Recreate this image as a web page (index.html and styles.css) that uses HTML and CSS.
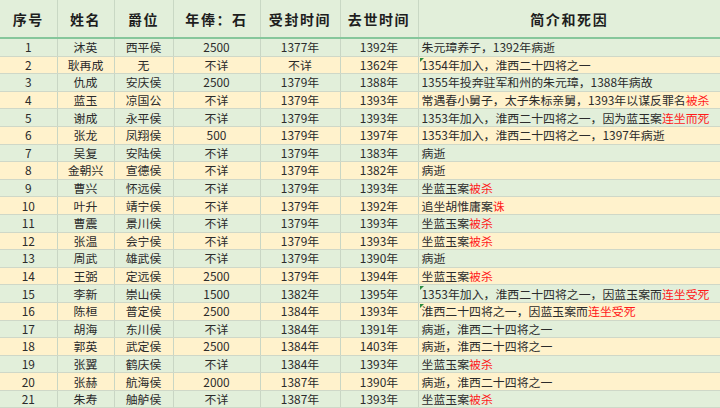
FILE: index.html
```html
<!DOCTYPE html>
<html lang="zh">
<head>
<meta charset="utf-8">
<link rel="stylesheet" href="styles.css">
</head>
<body>
<table class="sheet">
<colgroup>
<col class="c1"><col class="c2"><col class="c3"><col class="c4"><col class="c5"><col class="c6"><col class="c7">
</colgroup>
<thead>
<tr><th>序号</th><th>姓名</th><th>爵位</th><th>年俸：石</th><th>受封时间</th><th>去世时间</th><th>简介和死因</th></tr>
</thead>
<tbody>
<tr><td>1</td><td>沐英</td><td>西平侯</td><td>2500</td><td>1377年</td><td>1392年</td><td class="txt">朱元璋养子，1392年病逝</td></tr>
<tr><td>2</td><td>耿再成</td><td>无</td><td>不详</td><td>不详</td><td>1362年</td><td class="txt mark">1354年加入，淮西二十四将之一</td></tr>
<tr><td>3</td><td>仇成</td><td>安庆侯</td><td>2500</td><td>1379年</td><td>1388年</td><td class="txt">1355年投奔驻军和州的朱元璋，1388年病故</td></tr>
<tr><td>4</td><td>蓝玉</td><td>凉国公</td><td>不详</td><td>1379年</td><td>1393年</td><td class="txt">常遇春小舅子，太子朱标亲舅，1393年以谋反罪名<span class="r">被杀</span></td></tr>
<tr><td>5</td><td>谢成</td><td>永平侯</td><td>不详</td><td>1379年</td><td>1393年</td><td class="txt">1353年加入，淮西二十四将之一，因为蓝玉案<span class="r">连坐而死</span></td></tr>
<tr><td>6</td><td>张龙</td><td>凤翔侯</td><td>500</td><td>1379年</td><td>1397年</td><td class="txt">1353年加入，淮西二十四将之一，1397年病逝</td></tr>
<tr><td>7</td><td>吴复</td><td>安陆侯</td><td>不详</td><td>1379年</td><td>1383年</td><td class="txt">病逝</td></tr>
<tr><td>8</td><td>金朝兴</td><td>宣德侯</td><td>不详</td><td>1379年</td><td>1382年</td><td class="txt">病逝</td></tr>
<tr><td>9</td><td>曹兴</td><td>怀远侯</td><td>不详</td><td>1379年</td><td>1393年</td><td class="txt">坐蓝玉案<span class="r">被杀</span></td></tr>
<tr><td>10</td><td>叶升</td><td>靖宁侯</td><td>不详</td><td>1379年</td><td>1392年</td><td class="txt">追坐胡惟庸案<span class="r">诛</span></td></tr>
<tr><td>11</td><td>曹震</td><td>景川侯</td><td>不详</td><td>1379年</td><td>1393年</td><td class="txt">坐蓝玉案<span class="r">被杀</span></td></tr>
<tr><td>12</td><td>张温</td><td>会宁侯</td><td>不详</td><td>1379年</td><td>1393年</td><td class="txt">坐蓝玉案<span class="r">被杀</span></td></tr>
<tr><td>13</td><td>周武</td><td>雄武侯</td><td>不详</td><td>1379年</td><td>1390年</td><td class="txt">病逝</td></tr>
<tr><td>14</td><td>王弼</td><td>定远侯</td><td>2500</td><td>1379年</td><td>1394年</td><td class="txt">坐蓝玉案<span class="r">被杀</span></td></tr>
<tr><td>15</td><td>李新</td><td>崇山侯</td><td>1500</td><td>1382年</td><td>1395年</td><td class="txt mark">1353年加入，淮西二十四将之一，因蓝玉案而<span class="r">连坐受死</span></td></tr>
<tr><td>16</td><td>陈桓</td><td>普定侯</td><td>2500</td><td>1384年</td><td>1393年</td><td class="txt mark">淮西二十四将之一，因蓝玉案而<span class="r">连坐受死</span></td></tr>
<tr><td>17</td><td>胡海</td><td>东川侯</td><td>不详</td><td>1384年</td><td>1391年</td><td class="txt">病逝，淮西二十四将之一</td></tr>
<tr><td>18</td><td>郭英</td><td>武定侯</td><td>2500</td><td>1384年</td><td>1403年</td><td class="txt">病逝，淮西二十四将之一</td></tr>
<tr><td>19</td><td>张翼</td><td>鹤庆侯</td><td>不详</td><td>1384年</td><td>1393年</td><td class="txt">坐蓝玉案<span class="r">被杀</span></td></tr>
<tr><td>20</td><td>张赫</td><td>航海侯</td><td>2000</td><td>1387年</td><td>1390年</td><td class="txt">病逝，淮西二十四将之一</td></tr>
<tr><td>21</td><td>朱寿</td><td>舳舻侯</td><td>不详</td><td>1387年</td><td>1393年</td><td class="txt">坐蓝玉案<span class="r">被杀</span></td></tr>
</tbody>
</table>
</body>
</html>
```
FILE: styles.css
```css
html, body {
  margin: 0;
  padding: 0;
  background: #e2efda;
  overflow: hidden;
}
.sheet {
  border-collapse: collapse;
  table-layout: fixed;
  width: 720px;
  font-family: "Noto Sans CJK SC", "Noto Sans", sans-serif;
  color: #2b2b2b;
}
.c1 { width: 57px; }
.c2 { width: 57px; }
.c3 { width: 59px; }
.c4 { width: 87px; }
.c5 { width: 80px; }
.c6 { width: 78px; }
.c7 { width: 302px; }
.sheet th {
  height: 37px;
  padding: 0;
  background: #e2efda;
  border-right: 1px solid #c9d8c4;
  border-bottom: 2px solid #86c79b;
  font-size: 14px;
  font-weight: 700;
  letter-spacing: 1.6px;
  color: #1e1e1e;
  text-align: center;
  vertical-align: middle;
  font-family: "Noto Sans CJK SC", sans-serif;
}
.sheet th:last-child { border-right: none; }
.sheet td {
  height: 16.6px;
  padding: 0;
  font-size: 11.9px;
  line-height: 16px;
  text-align: center;
  vertical-align: middle;
  border-right: 1px solid #c9d6c4;
  border-bottom: 1px solid #cfd8c8;
  white-space: nowrap;
  overflow: hidden;
}
.sheet tbody tr:nth-child(odd) td { background: #e2efda; }
.sheet tbody tr:nth-child(even) td { background: #fff2cc; }
.sheet td:last-child { border-right: none; }
.sheet td.txt {
  text-align: left;
  padding-left: 3px;
}
.sheet td.mark {
  position: relative;
}
.sheet td.mark::before {
  content: "";
  position: absolute;
  left: 1px;
  top: 1px;
  width: 0;
  height: 0;
  border-top: 4px solid #2e8b3e;
  border-right: 4px solid transparent;
}
.r { color: #ff1a1a; }
```
